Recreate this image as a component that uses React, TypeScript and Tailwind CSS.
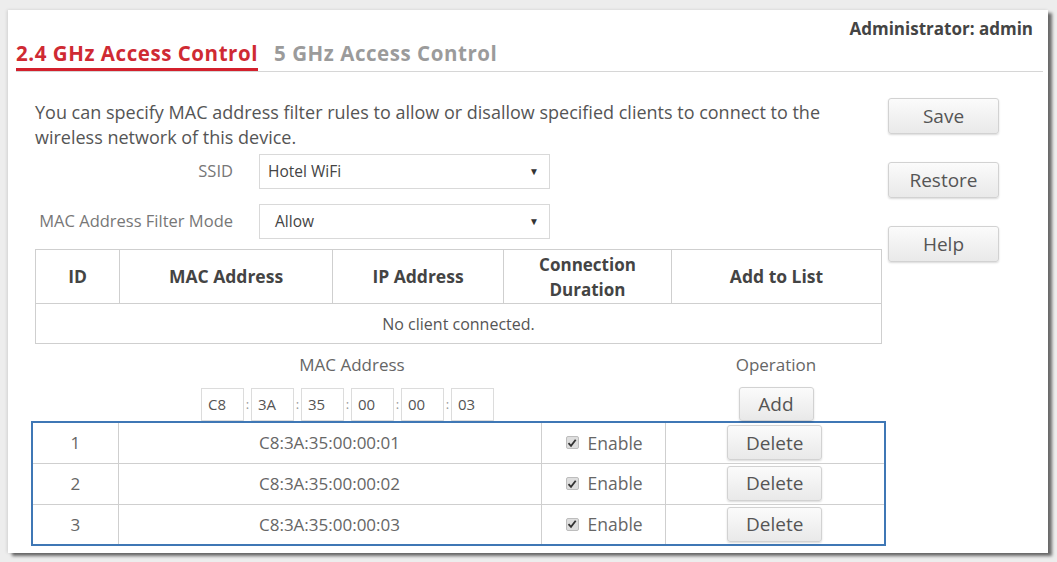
import React from 'react';

const font = { fontFamily: '"Open Sans", "Noto Sans", Arial, sans-serif' };

interface BtnProps {
  label: string;
  className?: string;
}

const Btn: React.FC<BtnProps> = ({ label, className = '' }) => (
  <button
    className={`flex items-center justify-center rounded-[3px] border border-[#d2d2d2] bg-gradient-to-b from-[#fbfbfb] to-[#e9e9e9] text-[19px] text-[#555] shadow-[0_1px_2px_rgba(0,0,0,0.15)] ${className}`}
  >
    {label}
  </button>
);

const Select: React.FC<{ value: string; indent?: string }> = ({ value, indent = 'pl-[8px]' }) => (
  <div
    className={`flex h-[35px] w-[291px] items-center justify-between border border-[#d9d9d9] pr-[10px] text-[15.5px] text-[#444] ${indent}`}
  >
    <span>{value}</span>
    <span className="text-[10px] text-[#333]">▼</span>
  </div>
);

const CheckBox: React.FC = () => (
  <span className="flex h-[13px] w-[13px] items-center justify-center rounded-[2px] border border-[#bdbdbd] bg-[#dedede]">
    <svg width="10" height="10" viewBox="0 0 10 10">
      <path d="M1.5 5.2 L4 7.8 L8.7 1.8" fill="none" stroke="#333" strokeWidth="1.8" />
    </svg>
  </span>
);

const macParts = ['C8', '3A', '35', '00', '00', '03'];

const rules = [
  { id: 1, mac: 'C8:3A:35:00:00:01' },
  { id: 2, mac: 'C8:3A:35:00:00:02' },
  { id: 3, mac: 'C8:3A:35:00:00:03' },
];

export default function App() {
  return (
    <div className="h-[562px] w-[1057px] overflow-hidden bg-[#ededed] pl-[8px] pt-[10px]" style={font}>
      <div className="h-[543px] w-[1040px] bg-white shadow-[4px_3px_3px_rgba(0,0,0,0.55),-1px_0_3px_rgba(0,0,0,0.12)]">
        {/* Header with tabs */}
        <div className="relative ml-[8px] mr-[5px] h-[62px] border-b border-[#d6d6d6]">
          <div className="absolute right-[10px] top-[6px] text-[17px] font-bold text-[#444]">
            Administrator: admin
          </div>
          <div className="flex h-full items-end gap-[16px]">
            <div className="border-b-[3px] border-[#d3202c] pb-[1px] text-[20.5px] font-bold leading-[28px] tracking-[0.55px] text-[#cf2a33]">
              2.4 GHz Access Control
            </div>
            <div className="pb-[4px] text-[20.5px] font-bold leading-[28px] tracking-[0.55px] text-[#9b9b9b]">
              5 GHz Access Control
            </div>
          </div>
        </div>

        <div className="flex">
          {/* Left content */}
          <div className="ml-[27px] w-[847px]">
            <p className="mt-[28px] w-[830px] text-[18px] leading-[25px] text-[#555]">
              You can specify MAC address filter rules to allow or disallow specified clients to connect to the
              wireless network of this device.
            </p>

            <div className="mt-[4px] flex items-center">
              <div className="w-[198px] text-right text-[16.5px] text-[#777]">SSID</div>
              <div className="ml-[26px]">
                <Select value="Hotel WiFi" />
              </div>
            </div>
            <div className="mt-[15px] flex items-center">
              <div className="w-[198px] text-right text-[16.5px] text-[#777]">MAC Address Filter Mode</div>
              <div className="ml-[26px]">
                <Select value="Allow" indent="pl-[15px]" />
              </div>
            </div>

            {/* Client table */}
            <table className="mt-[10px] w-[847px] border-collapse text-[17.5px] text-[#444]">
              <thead>
                <tr className="h-[54px]">
                  <th className="w-[84px] border border-[#cfcfcf] font-bold">ID</th>
                  <th className="w-[213px] border border-[#cfcfcf] font-bold">MAC Address</th>
                  <th className="w-[171px] border border-[#cfcfcf] font-bold">IP Address</th>
                  <th className="w-[168px] border border-[#cfcfcf] text-[17px] font-bold leading-[25px]">
                    Connection
                    <br />
                    Duration
                  </th>
                  <th className="border border-[#cfcfcf] font-bold">Add to List</th>
                </tr>
              </thead>
              <tbody>
                <tr className="h-[40px]">
                  <td colSpan={5} className="border border-[#cfcfcf] text-center text-[16px] text-[#555]">
                    No client connected.
                  </td>
                </tr>
              </tbody>
            </table>

            {/* Add rule */}
            <div className="mt-[8px] flex text-[17px] text-[#666]">
              <div className="w-[666px]">
                <div className="ml-[166px] w-[302px] text-center leading-[26px]">MAC Address</div>
                <div className="ml-[166px] mt-[10px] flex items-center">
                  {macParts.map((p, i) => (
                    <React.Fragment key={i}>
                      {i > 0 && <span className="w-[7px] text-center text-[13px] text-[#999]">:</span>}
                      <div className="flex h-[33px] w-[43px] items-center border border-[#dcdcdc] pl-[6px] text-[15px] text-[#555]">
                        {p}
                      </div>
                    </React.Fragment>
                  ))}
                </div>
              </div>
              <div className="flex w-[150px] flex-col items-center">
                <div className="leading-[26px]">Operation</div>
                <Btn label="Add" className="mt-[9px] h-[34px] w-[75px]" />
              </div>
            </div>

            {/* Rules table */}
            <table className="-ml-[4px] w-[855px] border-collapse border-2 border-[#3f77b5] text-[17px] text-[#666]">
              <tbody>
                {rules.map((r) => (
                  <tr key={r.id} className="h-[41px]">
                    <td className="w-[86px] border border-[#cfcfcf] text-center">{r.id}</td>
                    <td className="w-[423px] border border-[#cfcfcf] text-center">{r.mac}</td>
                    <td className="w-[124px] border border-[#cfcfcf]">
                      <div className="flex items-center gap-[9px] pl-[24px]">
                        <CheckBox />
                        <span className="text-[17.5px]">Enable</span>
                      </div>
                    </td>
                    <td className="border border-[#cfcfcf]">
                      <div className="flex justify-center">
                        <Btn label="Delete" className="h-[35px] w-[95px]" />
                      </div>
                    </td>
                  </tr>
                ))}
              </tbody>
            </table>
          </div>

          {/* Right buttons */}
          <div className="ml-[6px] mt-[26px] flex flex-col gap-[28px]">
            <Btn label="Save" className="h-[36px] w-[111px]" />
            <Btn label="Restore" className="h-[36px] w-[111px]" />
            <Btn label="Help" className="h-[36px] w-[111px]" />
          </div>
        </div>
      </div>
    </div>
  );
}
